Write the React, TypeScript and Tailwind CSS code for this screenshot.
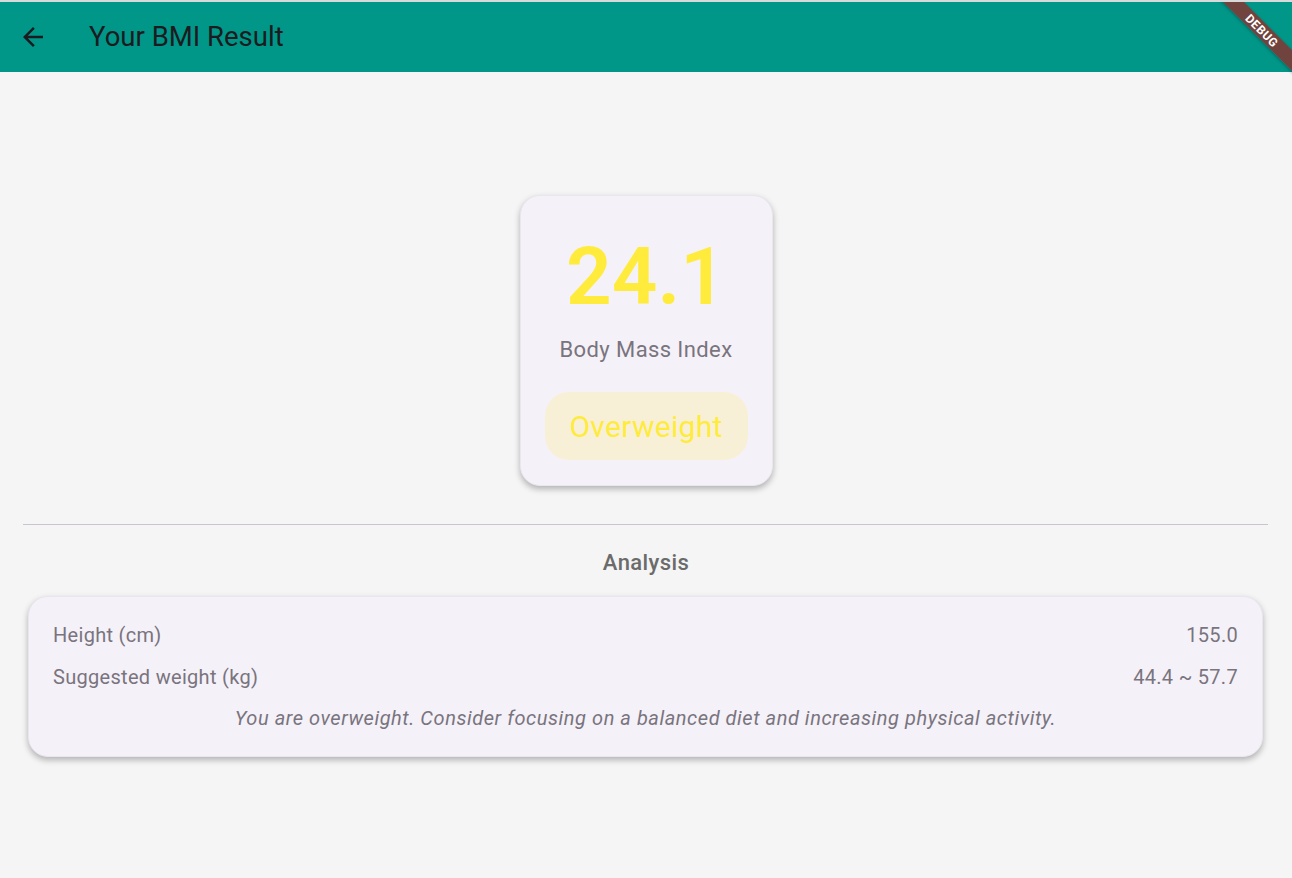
import React from "react";

export default function App() {
  return (
    <div className="relative min-h-[878px] w-full bg-[#f5f5f5] overflow-hidden" style={{ fontFamily: "Roboto, 'Noto Sans', sans-serif" }}>
      <div className="h-[2px] bg-[#d9d9d9]" />
      <header className="h-[70px] bg-[#009688] flex items-center pl-[18px]">
        <svg viewBox="0 0 24 24" className="w-[30px] h-[30px] text-[#1d1b20]" fill="currentColor">
          <path d="M20 11H7.83l5.59-5.59L12 4l-8 8 8 8 1.41-1.41L7.83 13H20v-2z" />
        </svg>
        <h1 className="ml-[41px] text-[27.5px] leading-none text-[#1d1b20]">Your BMI Result</h1>
      </header>

      <main className="flex flex-col items-center pt-[123px]">
        <div className="w-[253px] rounded-[20px] bg-[#f5f1f8] shadow-[0_3px_6px_rgba(0,0,0,0.28)] border border-[#ebe6ee] px-[24px] pt-[31px] pb-[25px] flex flex-col items-center">
          <div className="text-[80px] leading-[100px] font-semibold text-[#ffeb3b]">24.1</div>
          <div className="mt-[10px] text-[22px] leading-[26px] tracking-[0.4px] text-[#79747e]">Body Mass Index</div>
          <div className="mt-[29px] w-full h-[68px] rounded-[24px] bg-[#f8f0d6] flex items-center justify-center text-[30px] tracking-[0.3px] text-[#ffeb3b]">Overweight</div>
        </div>

        <div className="mt-[38px] self-stretch ml-[23px] mr-[24px] h-px bg-[#cac4d0]" />

        <h2 className="mt-[26px] text-[22px] leading-[24px] tracking-[0.4px] font-medium text-[#6b6b6b]">Analysis</h2>

        <div className="mt-[21px] self-stretch ml-[28px] mr-[29px] rounded-[20px] bg-[#f5f1f8] shadow-[0_3px_6px_rgba(0,0,0,0.28)] border border-[#ebe6ee] px-[24px] pt-[26px] pb-[26px] flex flex-col text-[20px] leading-[24px] tracking-[0.3px] text-[#79747e]">
          <div className="flex justify-between">
            <span>Height (cm)</span>
            <span>155.0</span>
          </div>
          <div className="mt-[18px] flex justify-between">
            <span>Suggested weight (kg)</span>
            <span>44.4 ~ 57.7</span>
          </div>
          <div className="mt-[17px] text-center italic tracking-[0.55px]">You are overweight. Consider focusing on a balanced diet and increasing physical activity.</div>
        </div>
      </main>

      <div className="absolute top-[2px] right-0 w-[100px] h-[100px] overflow-hidden pointer-events-none">
        <div className="absolute left-0 top-[20.5px] w-[140px] h-[15px] rotate-45 bg-[rgba(170,24,24,0.66)] shadow-[0_1px_3px_rgba(0,0,0,0.3)] flex items-center justify-center">
          <span className="text-white font-bold text-[12px] leading-none tracking-[0.5px]">DEBUG</span>
        </div>
      </div>
    </div>
  );
}
